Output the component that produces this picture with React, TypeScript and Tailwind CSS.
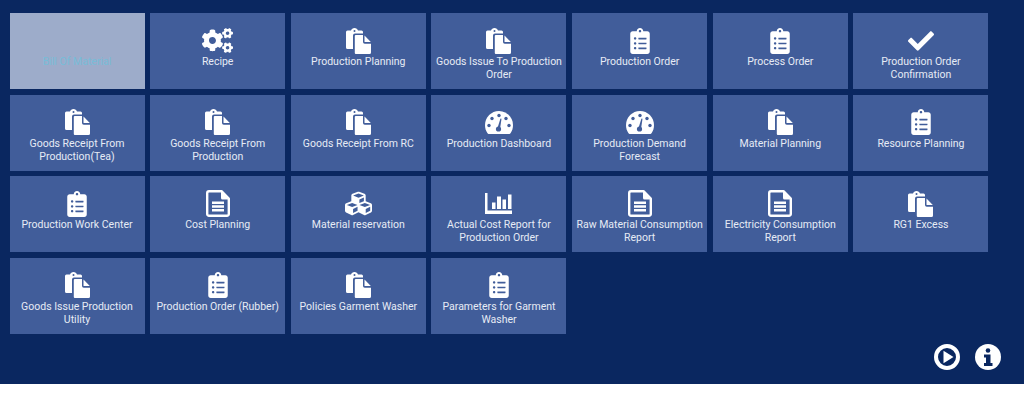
import React from "react";
import { FaCogs, FaClipboardList, FaCheck, FaCubes } from "react-icons/fa";

type IconP = { className?: string };

const Paste = ({ className }: IconP) => (
  <svg viewBox="0 0 25 26" width="25" height="26" className={className}>
    <path fill="#fff" d="M1.500 2.500H5C5.500 1 6.800 0 8.500 0S11.500 1 12 2.500h3.500A1.500 1.500 0 0 1 17 4v1.500H9A2 2 0 0 0 7 7.500V21H1.500A1.500 1.500 0 0 1 0 19.500V4A1.500 1.500 0 0 1 1.500 2.500Z" />
    <circle cx="8.500" cy="3" r="1" fill="#415d9a" />
    <path fill="#fff" d="M9.800 7H17v7A1.800 1.800 0 0 0 18.800 15.800H25v8.700A1.500 1.500 0 0 1 23.500 26H9.800A1 1 0 0 1 8.800 25V8A1 1 0 0 1 9.800 7Z" />
    <path fill="#fff" d="M18.500 7.500 24.800 14H19A.5.5 0 0 1 18.500 13.500Z" />
  </svg>
);

const Gauge = ({ className }: IconP) => (
  <svg viewBox="0 0 28 23" width="28" height="23" className={className}>
    <path fill="#fff" d="M14 0C6.300 0 0 6.300 0 14c0 3 .8 5.500 2.200 7.800.5.800 1 1.200 2 1.200h19.600c1 0 1.500-.4 2-1.200C27.200 19.500 28 17 28 14 28 6.300 21.700 0 14 0Z" />
    <g fill="#415d9a">
      <circle cx="4" cy="14.500" r="1.700" />
      <circle cx="7" cy="7.500" r="1.700" />
      <circle cx="14" cy="4.500" r="1.700" />
      <circle cx="24" cy="14.500" r="1.700" />
      <circle cx="21" cy="7.500" r="1.700" />
      <circle cx="13.500" cy="18" r="2.600" />
      <path d="M12.500 17 15.500 7.500l1 .3L15 18Z" />
    </g>
  </svg>
);

const Chart = ({ className }: IconP) => (
  <svg viewBox="0 0 27 21" width="27" height="21" className={className}>
    <path fill="#fff" d="M0 0h2.500v17.500H27V21H0Z" />
    <path fill="#fff" d="M7 9.500h3.500V16H7ZM12 3.500h4V16h-4ZM17.500 6.500H21V16h-3.500ZM23 1.500h3.500V16H23Z" />
  </svg>
);

const Doc = ({ className }: IconP) => (
  <svg viewBox="0 0 24 27" width="24" height="27" className={className}>
    <path fill="none" stroke="#fff" strokeWidth="2.400" strokeLinejoin="round" d="M3 1.200H15.500L22.800 8.500V24A1.800 1.800 0 0 1 21 25.800H3A1.800 1.800 0 0 1 1.200 24V3A1.800 1.800 0 0 1 3 1.200Z" />
    <path fill="#fff" d="M15 1 23 9.500H16.500A1.500 1.500 0 0 1 15 8Z" />
    <path fill="#fff" d="M6 11.500h12V14H6ZM6 15.300h12v2.500H6ZM6 19.100h12v2.500H6Z" />
  </svg>
);

const Cogs = ({ className }: IconP) => <FaCogs className={"text-[31px] " + (className ?? "")} />;
const Clip = ({ className }: IconP) => <FaClipboardList className={"text-[26px] " + (className ?? "")} />;
const Check = ({ className }: IconP) => <FaCheck className={"text-[26px] " + (className ?? "")} />;
const Cubes = ({ className }: IconP) => <FaCubes className={"text-[27px] " + (className ?? "")} />;

const items: { t: string; I?: React.ComponentType<IconP> }[] = [
  { t: "Bill Of Material" },
  { t: "Recipe", I: Cogs },
  { t: "Production Planning", I: Paste },
  { t: "Goods Issue To Production Order", I: Paste },
  { t: "Production Order", I: Clip },
  { t: "Process Order", I: Clip },
  { t: "Production Order Confirmation", I: Check },
  { t: "Goods Receipt From Production(Tea)", I: Paste },
  { t: "Goods Receipt From Production", I: Paste },
  { t: "Goods Receipt From RC", I: Paste },
  { t: "Production Dashboard", I: Gauge },
  { t: "Production Demand Forecast", I: Gauge },
  { t: "Material Planning", I: Paste },
  { t: "Resource Planning", I: Clip },
  { t: "Production Work Center", I: Clip },
  { t: "Cost Planning", I: Doc },
  { t: "Material reservation", I: Cubes },
  { t: "Actual Cost Report for Production Order", I: Chart },
  { t: "Raw Material Consumption Report", I: Doc },
  { t: "Electricity Consumption Report", I: Doc },
  { t: "RG1 Excess", I: Paste },
  { t: "Goods Issue Production Utility", I: Paste },
  { t: "Production Order (Rubber)", I: Clip },
  { t: "Policies Garment Washer", I: Paste },
  { t: "Parameters for Garment Washer", I: Clip },
];

export default function App() {
  return (
    <div className="h-[405px] bg-white font-['Roboto',sans-serif]">
      <div className="h-[384px] bg-[#0a2760] pl-[9.5px] pt-[13px] flex flex-col">
        <div className="grid grid-cols-[repeat(7,135px)] auto-rows-[76px] gap-x-[5.67px] gap-y-[5.5px] h-[321px]">
          {items.map((it, i) => (
            <div
              key={i}
              className={
                "flex flex-col items-center pt-[13px] text-center text-[10.5px] leading-[13px] " +
                (it.I ? "bg-[#415d9a] text-[#e6ebf5]" : "bg-[#9dacca] text-[#78bcd8]")
              }
            >
              <div className="h-[29px] flex items-center justify-center text-white">
                {it.I ? <it.I /> : null}
              </div>
              <div>{it.t}</div>
            </div>
          ))}
        </div>
        <div className="flex justify-end items-center gap-[15px] pr-[23px] mt-[10px]">
          <svg viewBox="0 0 26 26" width="26" height="26">
            <circle cx="13" cy="13" r="11" fill="none" stroke="#fff" strokeWidth="4" />
            <path fill="#fff" d="M9.500 6.800 19.500 13 9.500 19.200Z" />
          </svg>
          <svg viewBox="0 0 26 26" width="26" height="26">
            <circle cx="13" cy="13" r="13" fill="#fff" />
            <circle cx="13" cy="6.500" r="2.300" fill="#0a2760" />
            <path fill="#0a2760" d="M9 10.500h6.500V19H17.500v3H9v-3h2v-5.500H9Z" />
          </svg>
        </div>
      </div>
    </div>
  );
}
